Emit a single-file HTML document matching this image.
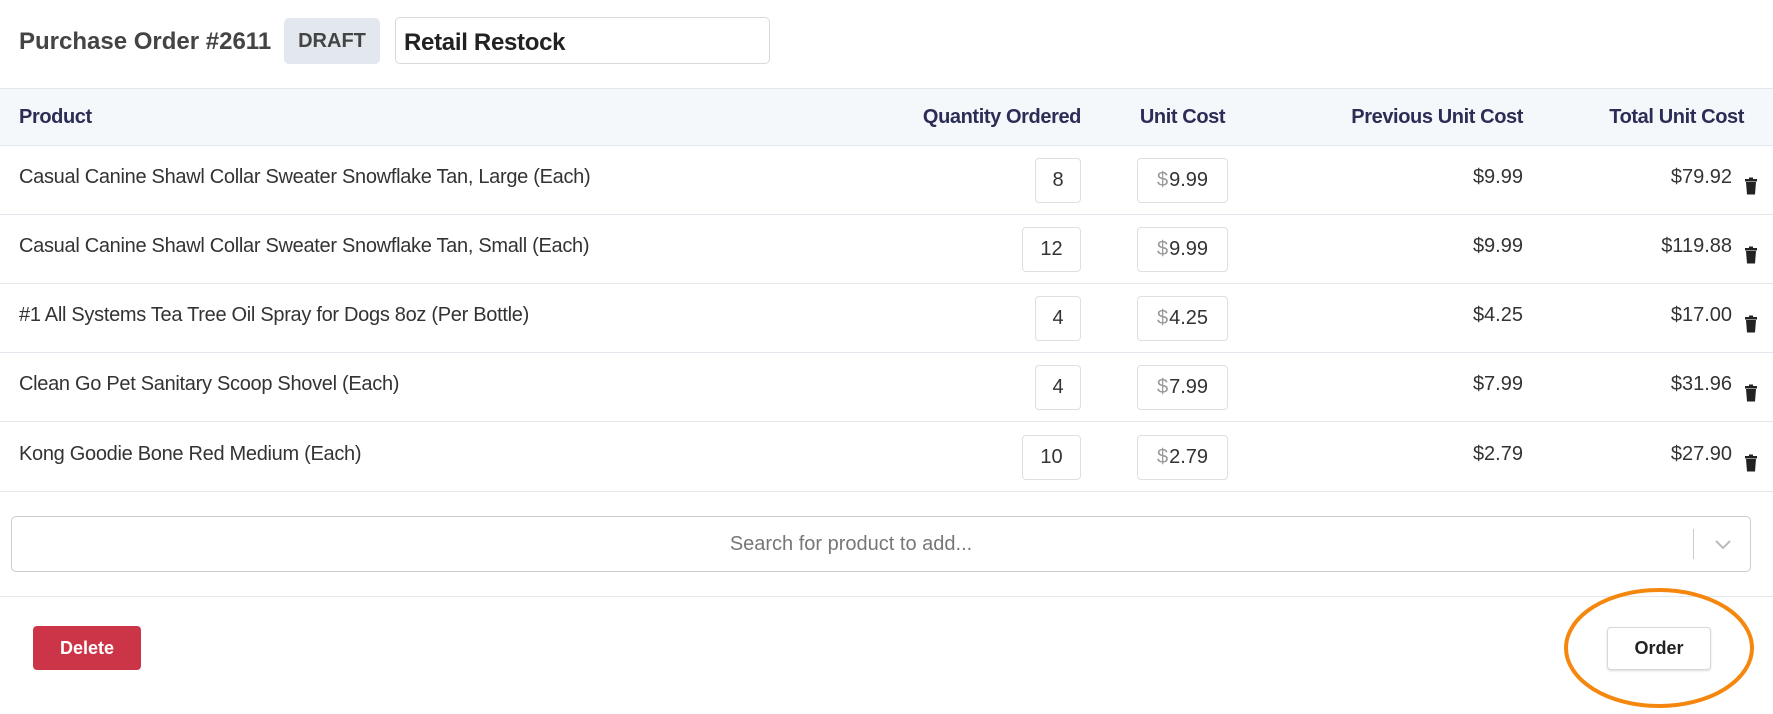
<!DOCTYPE html>
<html><head><meta charset="utf-8"><style>
*{box-sizing:border-box;margin:0;padding:0}
body{width:1773px;height:704px;background:#fff;font-family:"Liberation Sans",sans-serif;color:#333;position:relative;overflow:hidden}
.abs{position:absolute}
.title{left:19px;top:28px;font-size:24px;font-weight:bold;color:#444;letter-spacing:0}
.badge{left:284px;top:18px;width:96px;height:46px;background:#e3e7ee;border-radius:5px;font-size:20px;font-weight:bold;color:#444;display:flex;align-items:center;justify-content:center}
.name{left:395px;top:17px;width:375px;height:47px;border:1px solid #d6d9de;border-radius:5px;font-size:24px;font-weight:bold;color:#222;padding:11px 8px;letter-spacing:-0.3px}
.head{left:0;top:88px;width:1773px;height:58px;background:#f5f8fb;border-top:1px solid #e3e7ee;border-bottom:1px solid #e3e7ee}
.h{position:absolute;top:17px;font-size:20px;font-weight:bold;color:#2b2d55;white-space:nowrap;letter-spacing:-0.4px}
.row{position:absolute;left:0;width:1773px;height:69px;border-bottom:1px solid #e3e7ee}
.pn{position:absolute;left:19px;top:20px;font-size:20px;letter-spacing:-0.3px;white-space:nowrap}
.q{position:absolute;right:692px;top:12px;height:45px;border:1px solid #dcdfe4;border-radius:4px;font-size:20px;display:flex;align-items:center;justify-content:center}
.u{position:absolute;left:1137px;top:12px;width:91px;height:45px;border:1px solid #dcdfe4;border-radius:4px;font-size:20px;display:flex;align-items:center;justify-content:center}
.u span{color:#999;margin-right:1px}
.p{position:absolute;right:250px;top:20px;font-size:20px}
.t{position:absolute;right:41px;top:20px;font-size:20px}
.tr{position:absolute;left:1744px;top:31px;width:14px;height:18px}
.search{left:11px;top:516px;width:1740px;height:56px;border:1px solid #ccc;border-radius:5px}
.search .ph{position:absolute;left:0;right:60px;top:16px;text-align:center;font-size:20px;color:#777}
.div{left:0;top:596px;width:1773px;height:1px;background:#e3e7ee}
.del{left:33px;top:626px;width:108px;height:44px;background:#cc3448;color:#fff;border-radius:4px;font-size:18px;font-weight:bold;display:flex;align-items:center;justify-content:center}
.ord{left:1607px;top:627px;width:104px;height:43px;background:#fff;border:1px solid #d6d9de;border-radius:4px;box-shadow:0 1px 2px rgba(0,0,0,.15);font-size:18px;font-weight:bold;color:#222;display:flex;align-items:center;justify-content:center}
</style></head><body>
<div class="abs title">Purchase Order #2611</div>
<div class="abs badge">DRAFT</div>
<div class="abs name">Retail Restock</div>
<div class="abs head">
<div class="h" style="left:19px">Product</div>
<div class="h" style="right:692px">Quantity Ordered</div>
<div class="h" style="left:1137px;width:91px;text-align:center">Unit Cost</div>
<div class="h" style="right:250px">Previous Unit Cost</div>
<div class="h" style="right:29px">Total Unit Cost</div>
</div>
<div class="row" style="top:146px"><div class="pn">Casual Canine Shawl Collar Sweater Snowflake Tan, Large (Each)</div><div class="q" style="width:46px">8</div><div class="u"><span>$</span>9.99</div><div class="p">$9.99</div><div class="t">$79.92</div><svg class="tr" viewBox="0 0 14 18"><rect x="1" y="2" width="12" height="2.5" fill="#222"/><rect x="5" y="0.5" width="4" height="2" fill="#222"/><path d="M2 5h10l-1 12.5H3z" fill="#222"/></svg></div>
<div class="row" style="top:215px"><div class="pn">Casual Canine Shawl Collar Sweater Snowflake Tan, Small (Each)</div><div class="q" style="width:59px">12</div><div class="u"><span>$</span>9.99</div><div class="p">$9.99</div><div class="t">$119.88</div><svg class="tr" viewBox="0 0 14 18"><rect x="1" y="2" width="12" height="2.5" fill="#222"/><rect x="5" y="0.5" width="4" height="2" fill="#222"/><path d="M2 5h10l-1 12.5H3z" fill="#222"/></svg></div>
<div class="row" style="top:284px"><div class="pn">#1 All Systems Tea Tree Oil Spray for Dogs 8oz (Per Bottle)</div><div class="q" style="width:46px">4</div><div class="u"><span>$</span>4.25</div><div class="p">$4.25</div><div class="t">$17.00</div><svg class="tr" viewBox="0 0 14 18"><rect x="1" y="2" width="12" height="2.5" fill="#222"/><rect x="5" y="0.5" width="4" height="2" fill="#222"/><path d="M2 5h10l-1 12.5H3z" fill="#222"/></svg></div>
<div class="row" style="top:353px"><div class="pn">Clean Go Pet Sanitary Scoop Shovel (Each)</div><div class="q" style="width:46px">4</div><div class="u"><span>$</span>7.99</div><div class="p">$7.99</div><div class="t">$31.96</div><svg class="tr" viewBox="0 0 14 18"><rect x="1" y="2" width="12" height="2.5" fill="#222"/><rect x="5" y="0.5" width="4" height="2" fill="#222"/><path d="M2 5h10l-1 12.5H3z" fill="#222"/></svg></div>
<div class="row" style="top:423px"><div class="pn">Kong Goodie Bone Red Medium (Each)</div><div class="q" style="width:59px">10</div><div class="u"><span>$</span>2.79</div><div class="p">$2.79</div><div class="t">$27.90</div><svg class="tr" viewBox="0 0 14 18"><rect x="1" y="2" width="12" height="2.5" fill="#222"/><rect x="5" y="0.5" width="4" height="2" fill="#222"/><path d="M2 5h10l-1 12.5H3z" fill="#222"/></svg></div>
<div class="abs search"><div class="ph">Search for product to add...</div><div style="position:absolute;right:56px;top:12px;width:1px;height:30px;background:#ccc"></div><svg style="position:absolute;right:18px;top:22px" width="18" height="11" viewBox="0 0 18 11"><path d="M2 2l7 7 7-7" stroke="#bbb" stroke-width="2" fill="none"/></svg></div>
<div class="abs div"></div>
<div class="abs del">Delete</div>
<div class="abs ord">Order</div>
<svg class="abs" style="left:1560px;top:584px" width="200" height="130"><ellipse cx="99" cy="64" rx="93" ry="58" fill="none" stroke="#f5870f" stroke-width="4"/></svg>
</body></html>
